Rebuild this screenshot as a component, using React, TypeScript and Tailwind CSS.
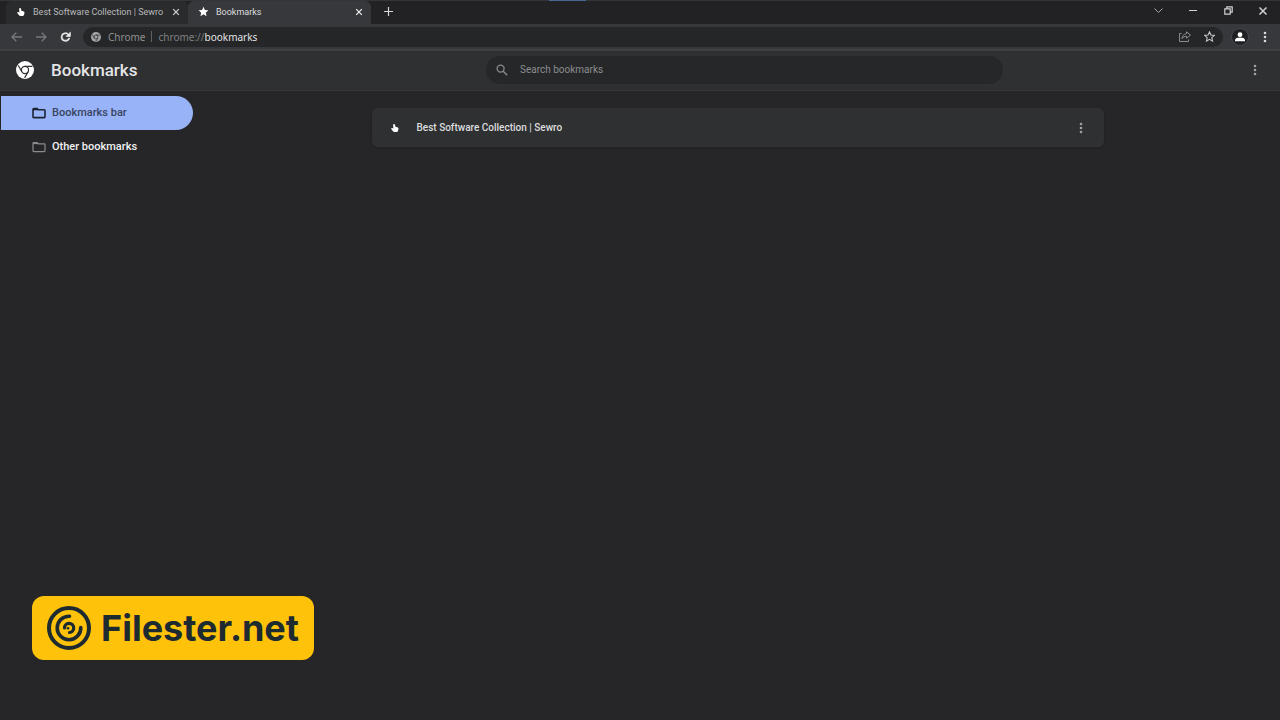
import { useState } from 'react'
import type { ReactNode } from 'react'

interface Folder {
  id: string
  label: string
}

interface Bookmark {
  id: string
  title: string
}

const folders: Folder[] = [
  { id: 'bar', label: 'Bookmarks bar' },
  { id: 'other', label: 'Other bookmarks' }
]

const bookmarks: Bookmark[] = [
  { id: '1', title: 'Best Software Collection | Sewro' }
]

function HandIcon() {
  return (
    <svg className="w-2 h-2 shrink-0" viewBox="0 0 16 16" fill="#ffffff">
      <path d="M6 0c1.200 0 1.800.8 2.100 2l.7 3.600 3.600.8c1.900.4 2.700 1.500 2.500 3.200l-.5 2.900c-.4 2.200-1.700 3.500-3.900 3.500H7.400c-1.700 0-2.800-.6-3.800-1.800L.9 10.600c-.7-.9-.4-2 .6-2.400.8-.3 1.700 0 2.500.7l.8.6L4.300 2C4.200.8 4.800 0 6 0z" />
    </svg>
  )
}

function StarIcon({ filled, className }: { filled?: boolean; className: string }) {
  return (
    <svg
      className={className}
      viewBox="0 0 24 24"
      fill={filled ? 'currentColor' : 'none'}
      stroke="currentColor"
      strokeWidth={filled ? 0 : 2.400}
    >
      <path d="M12 1.800l3.100 7 7.600.7-5.700 5.100 1.700 7.500-6.700-3.900-6.700 3.900L7 14.600 1.300 9.500l7.600-.7z" />
    </svg>
  )
}

function ChromeIcon({ className, line }: { className: string; line: string }) {
  return (
    <svg className={className} viewBox="0 0 24 24" fill="none">
      <circle cx="12" cy="12" r="12" fill="currentColor" />
      <g stroke={line} strokeWidth="1.600">
        <circle cx="12" cy="12" r="4.800" />
        <path d="M12 7.200h10M7.800 14.400L3 6M16.200 14.400L11.500 22.500" />
      </g>
    </svg>
  )
}

function CloseIcon({ className }: { className: string }) {
  return (
    <svg className={className} viewBox="0 0 10 10" stroke="currentColor" fill="none">
      <path d="M1.500 1.500l7 7M8.500 1.500l-7 7" strokeWidth="1.500" />
    </svg>
  )
}

function DotsIcon({ className }: { className: string }) {
  return (
    <svg className={className} viewBox="0 0 4 12" fill="currentColor">
      <circle cx="2" cy="2" r="1.300" />
      <circle cx="2" cy="6" r="1.300" />
      <circle cx="2" cy="10" r="1.300" />
    </svg>
  )
}

function FolderIcon({ active }: { active: boolean }) {
  return (
    <svg
      className={active ? 'w-[14px] h-3 text-[#1c2333]' : 'w-[14px] h-3 text-[#8b8c8e]'}
      viewBox="0 0 14 12"
      fill="none"
      stroke="currentColor"
      strokeWidth={active ? 1.600 : 1.200}
    >
      <path d="M1.800 1.500h3.400l1.200 1.300h5.800c.4 0 .8.300.8.800v6.200c0 .5-.4.800-.8.800H1.800c-.5 0-.8-.3-.8-.8V2.300c0-.5.3-.8.800-.8z" />
      <path d="M1.200 2.500h4.800" />
    </svg>
  )
}

function IconButton({ label, className, children }: { label: string; className: string; children: ReactNode }) {
  return (
    <button type="button" aria-label={label} className={`flex items-center justify-center shrink-0 ${className}`}>
      {children}
    </button>
  )
}

function TabStrip() {
  return (
    <div className="flex items-stretch h-6 pl-[6px] bg-[#222224] border-t border-[#343537]">
      <div className="flex items-center w-[182px] pb-0.5 pl-[11px] pr-[6px] rounded-t-md bg-[#2a2b2d] text-[#b9babc]">
        <HandIcon />
        <span className="flex-1 ml-2 text-[9px] leading-3 whitespace-nowrap">Best Software Collection | Sewro</span>
        <IconButton label="Close tab" className="w-3 h-4 text-[#d5d6d8]">
          <CloseIcon className="w-2 h-2" />
        </IconButton>
      </div>
      <div className="flex items-center w-[183px] pb-0.5 pl-[10px] pr-[6px] rounded-t-md bg-[#37383b] text-[#dddedf]">
        <StarIcon filled className="w-[11px] h-[11px] shrink-0 text-white" />
        <span className="flex-1 ml-[7px] text-[9px] leading-3 whitespace-nowrap">Bookmarks</span>
        <IconButton label="Close tab" className="w-3 h-4 text-[#f1f1f2]">
          <CloseIcon className="w-2 h-2" />
        </IconButton>
      </div>
      <IconButton label="New tab" className="w-[34px] pb-0.5 text-[#d5d6d8]">
        <svg className="w-[9px] h-[9px]" viewBox="0 0 9 9" stroke="currentColor">
          <path d="M4.500 0v9M0 4.500h9" strokeWidth="1.200" />
        </svg>
      </IconButton>
      <div className="flex-1" />
      <div className="flex h-[19px] text-[#d0d1d2]">
        <IconButton label="Search tabs" className="w-9 text-[#a4a5a7]">
          <svg className="w-[9px] h-[5px]" viewBox="0 0 9 5" fill="none" stroke="currentColor">
            <path d="M.5.500l4 4 4-4" />
          </svg>
        </IconButton>
        <IconButton label="Minimize" className="w-[34px]">
          <svg className="w-2 h-2" viewBox="0 0 8 8" stroke="currentColor">
            <path d="M0 3.500h8" />
          </svg>
        </IconButton>
        <IconButton label="Restore" className="w-9">
          <svg className="w-[9px] h-[9px]" viewBox="0 0 9 9" fill="none" stroke="currentColor" strokeWidth="1.200">
            <path d="M.8 2.800h5.400v5.400H.8zM2.800 2.800v-2h5.400v5.400h-2" />
          </svg>
        </IconButton>
        <IconButton label="Close window" className="w-[34px]">
          <CloseIcon className="w-[10px] h-[10px]" />
        </IconButton>
      </div>
    </div>
  )
}

function Toolbar() {
  const [address, setAddress] = useState('bookmarks')

  return (
    <div className="flex items-center h-[27px] pl-[10px] pr-[6px] bg-[#37383b] border-b-2 border-[#3f4042] font-['Noto_Sans',sans-serif]">
      <IconButton label="Back" className="w-[13px] h-5 text-[#77787b]">
        <svg className="w-[11px] h-[10px]" viewBox="0 0 11 10" fill="none" stroke="currentColor" strokeWidth="1.300">
          <path d="M11 5H1M5.300.700L1 5l4.300 4.300" />
        </svg>
      </IconButton>
      <IconButton label="Forward" className="w-[13px] h-5 ml-3 text-[#77787b]">
        <svg className="w-[11px] h-[10px]" viewBox="0 0 11 10" fill="none" stroke="currentColor" strokeWidth="1.300">
          <path d="M0 5h10M5.700.700L10 5 5.700 9.300" />
        </svg>
      </IconButton>
      <IconButton label="Reload" className="w-[13px] h-5 ml-[11px] text-[#eeeeef]">
        <svg className="w-[14px] h-[14px]" viewBox="0 0 24 24" fill="currentColor">
          <path
            d="M17.650 6.350A7.950 7.950 0 0 0 12 4a8 8 0 1 0 7.730 10h-2.080A6 6 0 1 1 12 6c1.660 0 3.140.690 4.220 1.780L13 11h8V3z"
            stroke="currentColor"
            strokeWidth="1.200"
          />
        </svg>
      </IconButton>
      <div className="flex items-center flex-1 h-5 ml-[11px] pl-2 pr-2 rounded-full bg-[#252628]">
        <ChromeIcon className="w-[10px] h-[10px] shrink-0 text-[#a2a3a5]" line="#252628" />
        <span className="ml-[7px] text-[10px] leading-4 text-[#8f9092]">Chrome</span>
        <span className="w-px h-[11px] mx-[6px] bg-[#606163]" />
        <label htmlFor="address" className="text-[10px] leading-4 text-[#7f8082]">
          chrome://
        </label>
        <input
          id="address"
          type="text"
          value={address}
          onChange={(e) => setAddress(e.target.value)}
          className="flex-1 h-4 text-[10px] leading-4 text-[#e2e3e4] bg-transparent outline-none"
        />
        <IconButton label="Share" className="w-3 h-4 text-[#8b8c8e]">
          <svg className="w-3 h-[11px]" viewBox="0 0 12 11" fill="none" stroke="currentColor">
            <path d="M2.500 2.500h-2v8h9v-2" />
            <path d="M7.500.800l4 3.200-4 3.200V5.300C5.500 5.300 4 6 3 7.700c.2-2.800 1.700-4.600 4.500-5z" />
          </svg>
        </IconButton>
        <IconButton label="Bookmark this tab" className="w-3 h-4 ml-3 text-[#c3c4c6]">
          <StarIcon className="w-[11px] h-[11px]" />
        </IconButton>
      </div>
      <IconButton label="Profile" className="w-[18px] h-[18px] ml-2 rounded-full bg-[#1f2023] border border-[#48494c] text-white">
        <svg className="w-[10px] h-[10px]" viewBox="0 0 10 10" fill="currentColor">
          <circle cx="5" cy="2.700" r="2.400" />
          <path d="M0 9.200V8c0-1.700 2.500-2.500 5-2.500s5 .8 5 2.500v1.200z" />
        </svg>
      </IconButton>
      <IconButton label="Customize and control" className="w-[18px] h-5 ml-[7px] text-[#d8d9da]">
        <DotsIcon className="w-1 h-3" />
      </IconButton>
    </div>
  )
}

function PageHeader() {
  const [query, setQuery] = useState('')

  return (
    <header className="flex items-center h-10 pb-0.5 bg-[#2f3032] border-b border-[#353638]">
      <div className="flex items-center w-[249px] pl-4">
        <ChromeIcon className="w-[18px] h-[18px] text-white" line="#2f3032" />
        <h1 className="ml-[17px] text-[17px] leading-5 font-medium text-[#e4e5e6]">Bookmarks</h1>
      </div>
      <div className="flex flex-1 justify-center">
        <div className="flex items-center w-full max-w-[517px] h-7 pl-[10px] rounded-full bg-[#262729]">
          <svg className="w-3 h-3 shrink-0" viewBox="0 0 12 12" fill="none" stroke="#8b8d90" strokeWidth="1.300">
            <circle cx="4.600" cy="4.600" r="3.500" />
            <path d="M7.200 7.200l4 4" />
          </svg>
          <input
            type="text"
            aria-label="Search bookmarks"
            placeholder="Search bookmarks"
            value={query}
            onChange={(e) => setQuery(e.target.value)}
            className="flex-1 ml-3 text-[10px] leading-4 text-white bg-transparent outline-none placeholder:text-[#8b8d90]"
          />
        </div>
      </div>
      <IconButton label="Organize" className="w-10 h-5 pr-[10px] text-[#a0a1a3]">
        <DotsIcon className="w-1 h-3" />
      </IconButton>
    </header>
  )
}

function Watermark() {
  return (
    <a
      href="#filester"
      className="fixed left-8 bottom-[60px] flex items-center h-16 pl-[15px] pr-[15px] rounded-xl bg-[#ffc20a] text-[#1d2a30] font-['Inter',sans-serif]"
    >
      <svg className="w-11 h-11" viewBox="0 0 44 44" fill="none" stroke="currentColor" strokeWidth="4">
        <circle cx="22" cy="22" r="20" />
        <path d="M22.500 10.200A11.800 11.800 0 1 0 33.800 21.500" strokeLinecap="round" strokeWidth="3.600" />
        <path d="M17.500 22A4.600 4.600 0 1 1 22.500 26.500" strokeLinecap="round" strokeWidth="3.200" />
        <circle cx="21" cy="22.300" r="1.300" fill="currentColor" stroke="none" />
      </svg>
      <span className="ml-[10px] text-[36px] leading-[44px] font-bold">Filester.net</span>
    </a>
  )
}

export default function App() {
  const [selected, setSelected] = useState('bar')

  return (
    <div className="flex flex-col min-h-screen bg-[#262628] font-['Roboto',sans-serif]">
      {/* Browser chrome */}
      <div className="relative">
        <TabStrip />
        <Toolbar />
        <div className="absolute top-0 left-[549px] w-[37px] h-px bg-[#4a6797]" />
      </div>

      <PageHeader />

      <div className="flex flex-1">
        {/* Folders */}
        <nav className="w-[193px] shrink-0 pt-[5px] pl-px">
          {folders.map((folder) => (
            <button
              key={folder.id}
              type="button"
              onClick={() => setSelected(folder.id)}
              className={
                folder.id === selected
                  ? 'flex items-center w-full h-[34px] pl-[31px] rounded-r-full bg-[#98b3f8] text-[#38445f]'
                  : 'flex items-center w-full h-[34px] pl-[31px] rounded-r-full text-[#f0f0f1]'
              }
            >
              <FolderIcon active={folder.id === selected} />
              <span className="ml-[6px] text-[11px] leading-4 font-medium">{folder.label}</span>
            </button>
          ))}
        </nav>

        {/* Bookmark list */}
        <main className="flex flex-1 justify-center pt-[17px] pl-0.5">
          <ul className="w-full max-w-[732px]">
            {bookmarks.map((bookmark) => (
              <li key={bookmark.id} className="flex items-center h-[39px] pl-[19px] pr-3 rounded-md bg-[#2f3032] shadow-sm">
                <HandIcon />
                <a href="#bookmark" className="flex-1 ml-[18px] text-[10px] leading-4 font-medium text-[#dcddde]">
                  {bookmark.title}
                </a>
                <IconButton label="More actions" className="w-[22px] h-5 text-[#a0a1a3]">
                  <DotsIcon className="w-1 h-3" />
                </IconButton>
              </li>
            ))}
          </ul>
        </main>
      </div>

      <Watermark />
    </div>
  )
}
